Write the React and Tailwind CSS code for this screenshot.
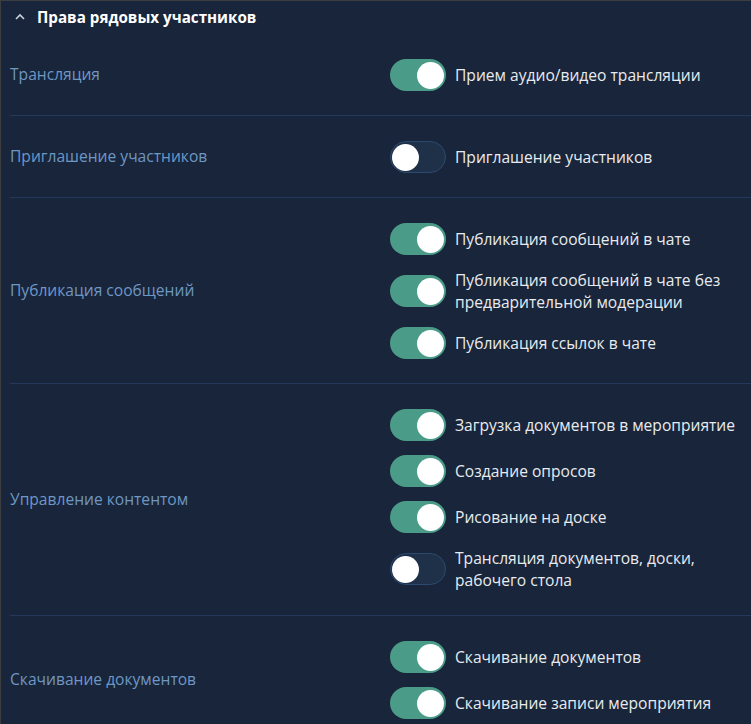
import React from "react";

const sections = [
  { label: "Трансляция", items: [{ on: true, text: "Прием аудио/видео трансляции" }] },
  { label: "Приглашение участников", items: [{ on: false, text: "Приглашение участников" }] },
  {
    label: "Публикация сообщений",
    items: [
      { on: true, text: "Публикация сообщений в чате" },
      { on: true, text: ["Публикация сообщений в чате без", "предварительной модерации"] },
      { on: true, text: "Публикация ссылок в чате" },
    ],
  },
  {
    label: "Управление контентом",
    items: [
      { on: true, text: "Загрузка документов в мероприятие" },
      { on: true, text: "Создание опросов" },
      { on: true, text: "Рисование на доске" },
      { on: false, text: ["Трансляция документов, доски,", "рабочего стола"] },
    ],
  },
  {
    label: "Скачивание документов",
    items: [
      { on: true, text: "Скачивание документов" },
      { on: true, text: "Скачивание записи мероприятия" },
    ],
  },
];

function Toggle({ on }) {
  if (on) {
    return (
      <div className="flex h-[32px] w-[56px] shrink-0 items-center justify-end rounded-full bg-[#4a9c88] pr-[2px]">
        <div className="h-[27px] w-[27px] rounded-full bg-white" />
      </div>
    );
  }
  return (
    <div className="flex h-[32px] w-[56px] shrink-0 items-center justify-start rounded-full border-[1.5px] border-[#2c4a6f] bg-[#1f3049] pl-[1px]">
      <div className="h-[27px] w-[27px] rounded-full bg-white" />
    </div>
  );
}

export default function App() {
  return (
    <div
      className="h-[724px] w-[751px] overflow-hidden border-l border-t border-[#3b3d40] bg-[#18253a]"
      style={{ fontFamily: '"Open Sans", "Noto Sans", sans-serif' }}
    >
      <div className="flex h-[32px] items-center pl-[12px]">
        <svg width="14" height="10" viewBox="0 0 14 10" className="mr-[10px]">
          <path d="M3 7 L7 3 L11 7" fill="none" stroke="#c9d1dc" strokeWidth="1.6" />
        </svg>
        <span className="text-[15.2px] font-bold text-white">Права рядовых участников</span>
      </div>
      <div className="pl-[9px]">
        {sections.map((s, i) => (
          <div
            key={i}
            className={`flex items-center pb-[24px] ${i < sections.length - 1 ? "border-b border-[#23385a]" : ""} ${i === 0 ? "pt-[26px]" : "pt-[25px]"}`}
          >
            <div className="w-[380px] shrink-0 text-[15.6px] text-[#6f97c4]">{s.label}</div>
            <div className="flex flex-col gap-[14px]">
              {s.items.map((it, j) => (
                <div key={j} className="flex items-center">
                  <Toggle on={it.on} />
                  <div className="ml-[9px] text-[15.6px] leading-[22px] text-[#e8ebef]">
                    {Array.isArray(it.text) ? (
                      <>
                        {it.text[0]}
                        <br />
                        {it.text[1]}
                      </>
                    ) : (
                      it.text
                    )}
                  </div>
                </div>
              ))}
            </div>
          </div>
        ))}
      </div>
    </div>
  );
}
